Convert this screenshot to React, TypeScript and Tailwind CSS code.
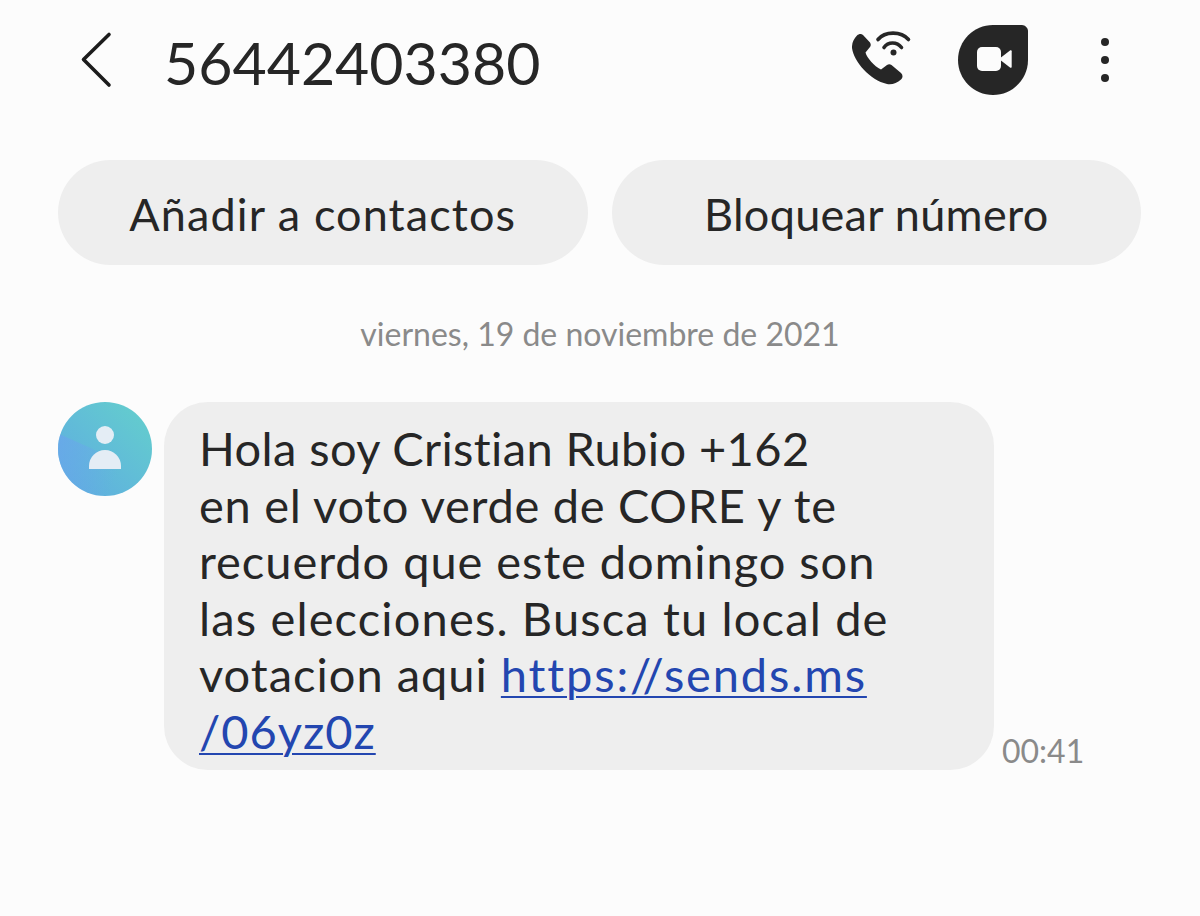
const font = { fontFamily: "Lato, sans-serif" };

function BackIcon() {
  return (
    <svg width="32" height="58" viewBox="0 0 32 58" fill="none" className="shrink-0">
      <path d="M29 3.500L3.500 28.500 29 54" stroke="#1c1c1c" strokeWidth="3.600" strokeLinecap="round" strokeLinejoin="round" />
    </svg>
  );
}

function WifiCallIcon() {
  return (
    <svg width="60" height="60" viewBox="0 0 60 60" fill="none">
      <path
        d="M5 5.500C7 3.500 9.500 3.500 11 5L18 12.500C19 14 19 15.500 18 17L13.500 22.500C15 28 22 36 29 39.500L35 35C36.500 34 38 34 39.500 35L49 43C51 45 51 47.500 49 49.500C45 53 40 55 35 54C18 50 2 32 0 18C-.3 13 2 8.500 5 5.500z"
        fill="#262626"
      />
      <path d="M26 9.500C33 1 49 1 56.500 9.500" stroke="#262626" strokeWidth="3.600" strokeLinecap="round" />
      <path d="M32 17.500C36 11.500 45 11.500 49.500 17.500" stroke="#262626" strokeWidth="3.600" strokeLinecap="round" />
      <circle cx="41.500" cy="22.500" r="3" fill="#262626" />
    </svg>
  );
}

function DuoIcon() {
  return (
    <svg width="72" height="72" viewBox="0 0 72 72">
      <path
        d="M36 1h29c3 0 6 3 6 6v29c0 19.300-15.700 35-35 35S1 55.300 1 36 16.700 1 36 1z"
        fill="#262626"
      />
      <rect x="20" y="23" width="24" height="24" rx="5" fill="#fcfcfc" />
      <path d="M42 35l11-8.500c.8-.6 1.700-.2 1.700 .8v15.400c0 1-.9 1.400-1.700 .8z" fill="#fcfcfc" />
    </svg>
  );
}

export default function App() {
  return (
    <div className="w-[1200px] h-[916px] bg-[#fcfcfc] text-[#262626] overflow-hidden" style={font}>
      <div className="flex items-center h-[120px] pl-[80px] pr-[91px]">
        <BackIcon />
        <span className="ml-[52px] text-[59px] leading-none mt-[4px]">56442403380</span>
        <div className="ml-auto flex items-center">
          <WifiCallIcon />
          <div className="ml-[45px]">
            <DuoIcon />
          </div>
          <div className="ml-[72px] flex flex-col gap-[10px]">
            <div className="w-2 h-2 rounded-full bg-[#262626]" />
            <div className="w-2 h-2 rounded-full bg-[#262626]" />
            <div className="w-2 h-2 rounded-full bg-[#262626]" />
          </div>
        </div>
      </div>

      <div className="flex gap-[24px] pl-[58px] pr-[59px] mt-[40px]">
        <button className="flex-1 h-[105px] pt-[4px] rounded-full bg-[#eeeeee] text-[45px] tracking-[1.100px]">Añadir a contactos</button>
        <button className="flex-1 h-[105px] pt-[4px] rounded-full bg-[#eeeeee] text-[45px] tracking-[.3px]">Bloquear número</button>
      </div>

      <p className="mt-[47px] text-center text-[32px] leading-[44px] text-[#8a8a8a]">viernes, 19 de noviembre de 2021</p>

      <div className="flex items-start mt-[46px] pl-[58px]">
        <div className="relative w-[94px] h-[94px] rounded-full overflow-hidden bg-gradient-to-tr from-[#5fa9e2] to-[#64d0cb] shrink-0">
          <div className="absolute left-[-40px] top-[38px] w-[90px] h-[90px] rotate-[24deg] bg-gradient-to-r from-[#6aa6ec] to-[#6aa6ec00]" />
          <div className="absolute left-[38px] top-[24px] w-[18px] h-[18px] rounded-full bg-[#e4edf5]" />
          <div className="absolute left-[31px] top-[48px] w-[32px] h-[19px] rounded-t-full rounded-b-[16px_6px] bg-[#e4edf5]" />
        </div>
        <div className="ml-[12px] w-[830px] h-[368px] rounded-[44px] bg-[#eeeeee] pl-[35px] pt-[18px] text-[47px] leading-[56.500px]">
          <div className="tracking-[.4px]">Hola soy Cristian Rubio +162</div>
          <div className="tracking-[.7px]">en el voto verde de CORE y te</div>
          <div className="tracking-[.95px]">recuerdo que este domingo son</div>
          <div className="tracking-[1.150px]">las elecciones. Busca tu local de</div>
          <div className="tracking-[1px]">
            votacion aqui <span className="text-[#2346b0] tracking-[1.850px] underline decoration-2 underline-offset-4">https://sends.ms</span>
          </div>
          <div className="tracking-[1px]">
            <span className="text-[#2346b0] underline decoration-2 underline-offset-4">/06yz0z</span>
          </div>
        </div>
        <span className="ml-[8px] mt-[329px] text-[32px] leading-[40px] text-[#8a8a8a]">00:41</span>
      </div>
    </div>
  );
}
